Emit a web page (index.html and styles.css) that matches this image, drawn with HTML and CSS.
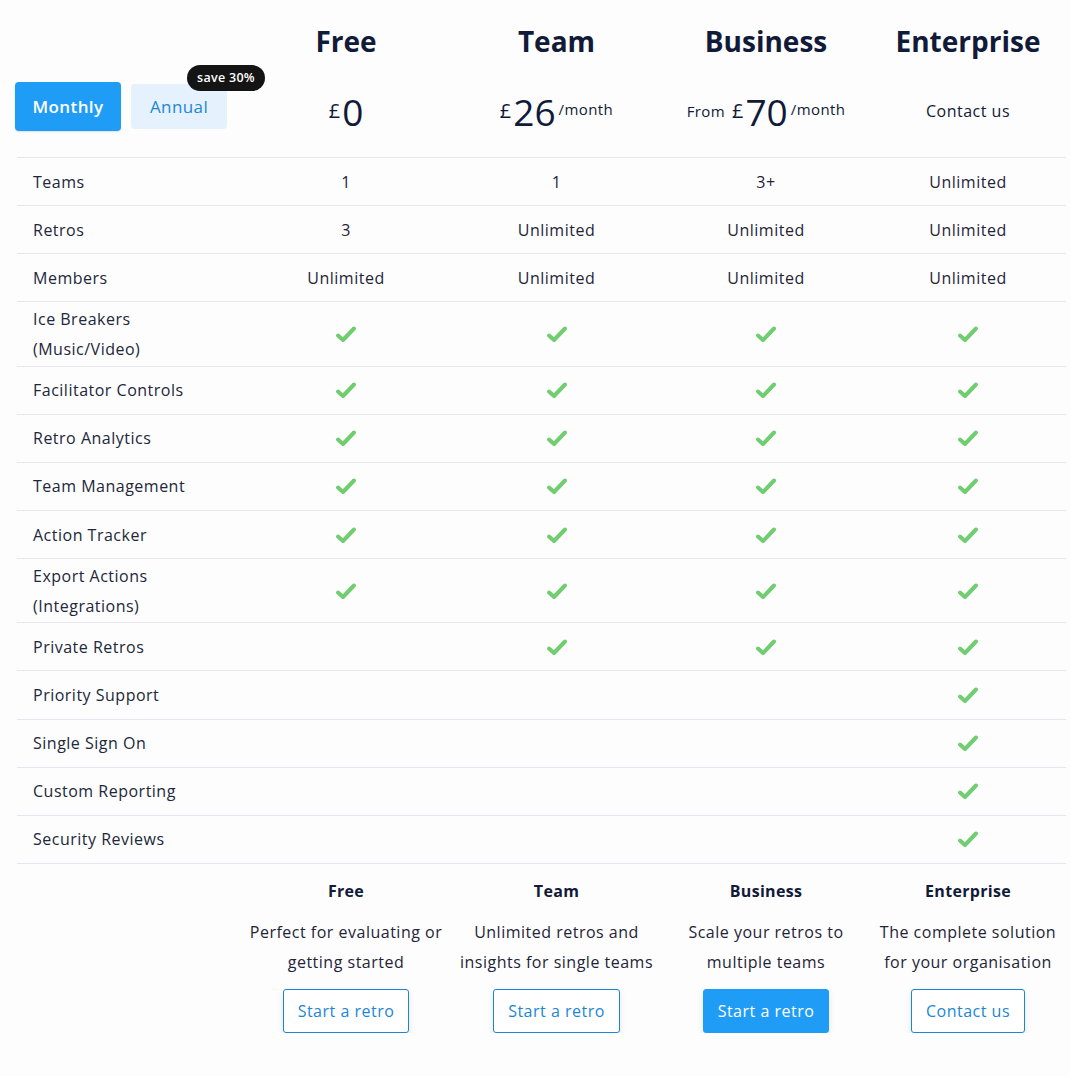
FILE: index.html
```html
<!DOCTYPE html>
<html>
<head>
<meta charset="utf-8">
<link rel="stylesheet" href="styles.css">
</head>
<body>
<div class="page">
  <div class="grid head-names">
    <div></div>
    <div class="plan-name">Free</div>
    <div class="plan-name">Team</div>
    <div class="plan-name">Business</div>
    <div class="plan-name">Enterprise</div>
  </div>
  <div class="grid head-prices">
    <div class="toggle">
      <button class="btn-toggle active">Monthly</button>
      <div class="annual-wrap">
        <button class="btn-toggle">Annual</button>
        <span class="badge">save 30%</span>
      </div>
    </div>
    <div class="price"><span class="cur">£</span><span class="amt">0</span></div>
    <div class="price"><span class="cur">£</span><span class="amt">26</span><span class="per">/month</span></div>
    <div class="price"><span class="from">From</span><span class="cur">£</span><span class="amt">70</span><span class="per">/month</span></div>
    <div class="price"><span class="contact">Contact us</span></div>
  </div>

  <div class="grid row"><div class="label">Teams</div><div class="val">1</div><div class="val">1</div><div class="val">3+</div><div class="val">Unlimited</div></div>
  <div class="grid row"><div class="label">Retros</div><div class="val">3</div><div class="val">Unlimited</div><div class="val">Unlimited</div><div class="val">Unlimited</div></div>
  <div class="grid row"><div class="label">Members</div><div class="val">Unlimited</div><div class="val">Unlimited</div><div class="val">Unlimited</div><div class="val">Unlimited</div></div>
  <div class="grid row tall"><div class="label">Ice Breakers<br>(Music/Video)</div><div class="val"><i class="chk"></i></div><div class="val"><i class="chk"></i></div><div class="val"><i class="chk"></i></div><div class="val"><i class="chk"></i></div></div>
  <div class="grid row"><div class="label">Facilitator Controls</div><div class="val"><i class="chk"></i></div><div class="val"><i class="chk"></i></div><div class="val"><i class="chk"></i></div><div class="val"><i class="chk"></i></div></div>
  <div class="grid row"><div class="label">Retro Analytics</div><div class="val"><i class="chk"></i></div><div class="val"><i class="chk"></i></div><div class="val"><i class="chk"></i></div><div class="val"><i class="chk"></i></div></div>
  <div class="grid row"><div class="label">Team Management</div><div class="val"><i class="chk"></i></div><div class="val"><i class="chk"></i></div><div class="val"><i class="chk"></i></div><div class="val"><i class="chk"></i></div></div>
  <div class="grid row"><div class="label">Action Tracker</div><div class="val"><i class="chk"></i></div><div class="val"><i class="chk"></i></div><div class="val"><i class="chk"></i></div><div class="val"><i class="chk"></i></div></div>
  <div class="grid row tall"><div class="label">Export Actions<br>(Integrations)</div><div class="val"><i class="chk"></i></div><div class="val"><i class="chk"></i></div><div class="val"><i class="chk"></i></div><div class="val"><i class="chk"></i></div></div>
  <div class="grid row"><div class="label">Private Retros</div><div class="val"></div><div class="val"><i class="chk"></i></div><div class="val"><i class="chk"></i></div><div class="val"><i class="chk"></i></div></div>
  <div class="grid row"><div class="label">Priority Support</div><div class="val"></div><div class="val"></div><div class="val"></div><div class="val"><i class="chk"></i></div></div>
  <div class="grid row"><div class="label">Single Sign On</div><div class="val"></div><div class="val"></div><div class="val"></div><div class="val"><i class="chk"></i></div></div>
  <div class="grid row"><div class="label">Custom Reporting</div><div class="val"></div><div class="val"></div><div class="val"></div><div class="val"><i class="chk"></i></div></div>
  <div class="grid row"><div class="label">Security Reviews</div><div class="val"></div><div class="val"></div><div class="val"></div><div class="val"><i class="chk"></i></div></div>

  <div class="grid foot">
    <div></div>
    <div class="plan"><div class="foot-name">Free</div><p class="desc">Perfect for evaluating or<br>getting started</p><a class="cta">Start a retro</a></div>
    <div class="plan"><div class="foot-name">Team</div><p class="desc">Unlimited retros and<br>insights for single teams</p><a class="cta">Start a retro</a></div>
    <div class="plan"><div class="foot-name">Business</div><p class="desc">Scale your retros to<br>multiple teams</p><a class="cta primary">Start a retro</a></div>
    <div class="plan"><div class="foot-name">Enterprise</div><p class="desc">The complete solution<br>for your organisation</p><a class="cta">Contact us</a></div>
  </div>
</div>
</body>
</html>
```
FILE: styles.css
```css
html, body {
  margin: 0;
  padding: 0;
  background: #fdfdfd;
}
body {
  font-family: "Open Sans", "Noto Sans", sans-serif;
  color: #1f2438;
  font-size: 16px;
  letter-spacing: 0.5px;
}
.page {
  padding: 0 4px 0 17px;
}
.grid {
  display: grid;
  grid-template-columns: 224px 210px 211px 208px 196px;
}
.head-names {
  padding-top: 21px;
  height: 49px;
}
.plan-name {
  text-align: center;
  font-size: 28px;
  font-weight: 700;
  line-height: 40px;
  color: #111a38;
  letter-spacing: 0;
}
.head-prices {
  height: 87px;
  border-bottom: 1px solid #e5e7f0;
  align-items: start;
}
.toggle {
  display: flex;
  align-items: center;
  gap: 10px;
  margin-left: -2px;
  margin-top: 12px;
}
.btn-toggle {
  font-family: inherit;
  font-size: 17px;
  letter-spacing: 0.4px;
  border: none;
  border-radius: 4px;
  background: #e5f2fd;
  color: #1c86d6;
  width: 96px;
  height: 45px;
  padding: 0;
  cursor: pointer;
}
.btn-toggle.active {
  background: #1f9cf6;
  color: #ffffff;
  width: 106px;
  height: 49px;
  font-weight: 600;
  box-shadow: 0 1px 2px rgba(0,0,0,0.12);
}
.annual-wrap {
  position: relative;
}
.badge {
  position: absolute;
  left: 56px;
  top: -19px;
  background: #141414;
  color: #fff;
  font-size: 12.5px;
  font-weight: 600;
  letter-spacing: 0.3px;
  line-height: 26px;
  height: 26px;
  padding: 0 10px;
  border-radius: 13px;
  white-space: nowrap;
}
.price {
  display: flex;
  justify-content: center;
  align-items: center;
  height: 50px;
  margin-top: 16px;
  color: #111a38;
  letter-spacing: 0;
}
.cur {
  font-size: 20px;
  margin-right: 2px;
  position: relative;
  top: -1px;
}
.amt {
  font-size: 37px;
  line-height: 1;
}
.per {
  font-size: 15px;
  letter-spacing: 0.4px;
  margin-left: 3px;
  position: relative;
  top: -2px;
}
.from {
  font-size: 15px;
  letter-spacing: 0.4px;
  margin-right: 7px;
}
.contact {
  font-size: 16px;
  letter-spacing: 0.5px;
}
.row {
  height: 47.15px;
  border-bottom: 1px solid #e5e7f0;
  align-items: center;
}
.row.tall {
  height: 63.15px;
}
.label {
  padding-left: 16px;
  line-height: 30px;
  font-size: 16px;
  color: #22273a;
}
.val {
  text-align: center;
  display: flex;
  justify-content: center;
  align-items: center;
}
.chk {
  display: block;
  width: 22px;
  height: 18px;
  background: url("data:image/svg+xml;utf8,<svg xmlns='http://www.w3.org/2000/svg' viewBox='0 0 22 18'><path d='M3 10.5 L8 15 L19 3.5' fill='none' stroke='%2370cd70' stroke-width='4' stroke-linecap='round' stroke-linejoin='round'/></svg>") no-repeat center;
}
.foot {
  padding-top: 14px;
}
.plan {
  display: flex;
  flex-direction: column;
  align-items: center;
  text-align: center;
}
.foot-name {
  font-weight: 700;
  font-size: 16px;
  line-height: 26px;
  color: #111a38;
  letter-spacing: 0.3px;
}
.desc {
  margin: 13px 0 12px;
  line-height: 30px;
  font-size: 16px;
}
.cta {
  display: inline-flex;
  align-items: center;
  justify-content: center;
  box-sizing: border-box;
  height: 44px;
  padding: 0 14px;
  border: 1px solid #1c86d6;
  border-radius: 3px;
  background: #fff;
  color: #1c86d6;
  font-size: 16px;
  box-shadow: 0 3px 6px rgba(0,0,0,0.1);
}
.cta.primary {
  background: #1f9cf6;
  border-color: #1f9cf6;
  color: #fff;
}
```
